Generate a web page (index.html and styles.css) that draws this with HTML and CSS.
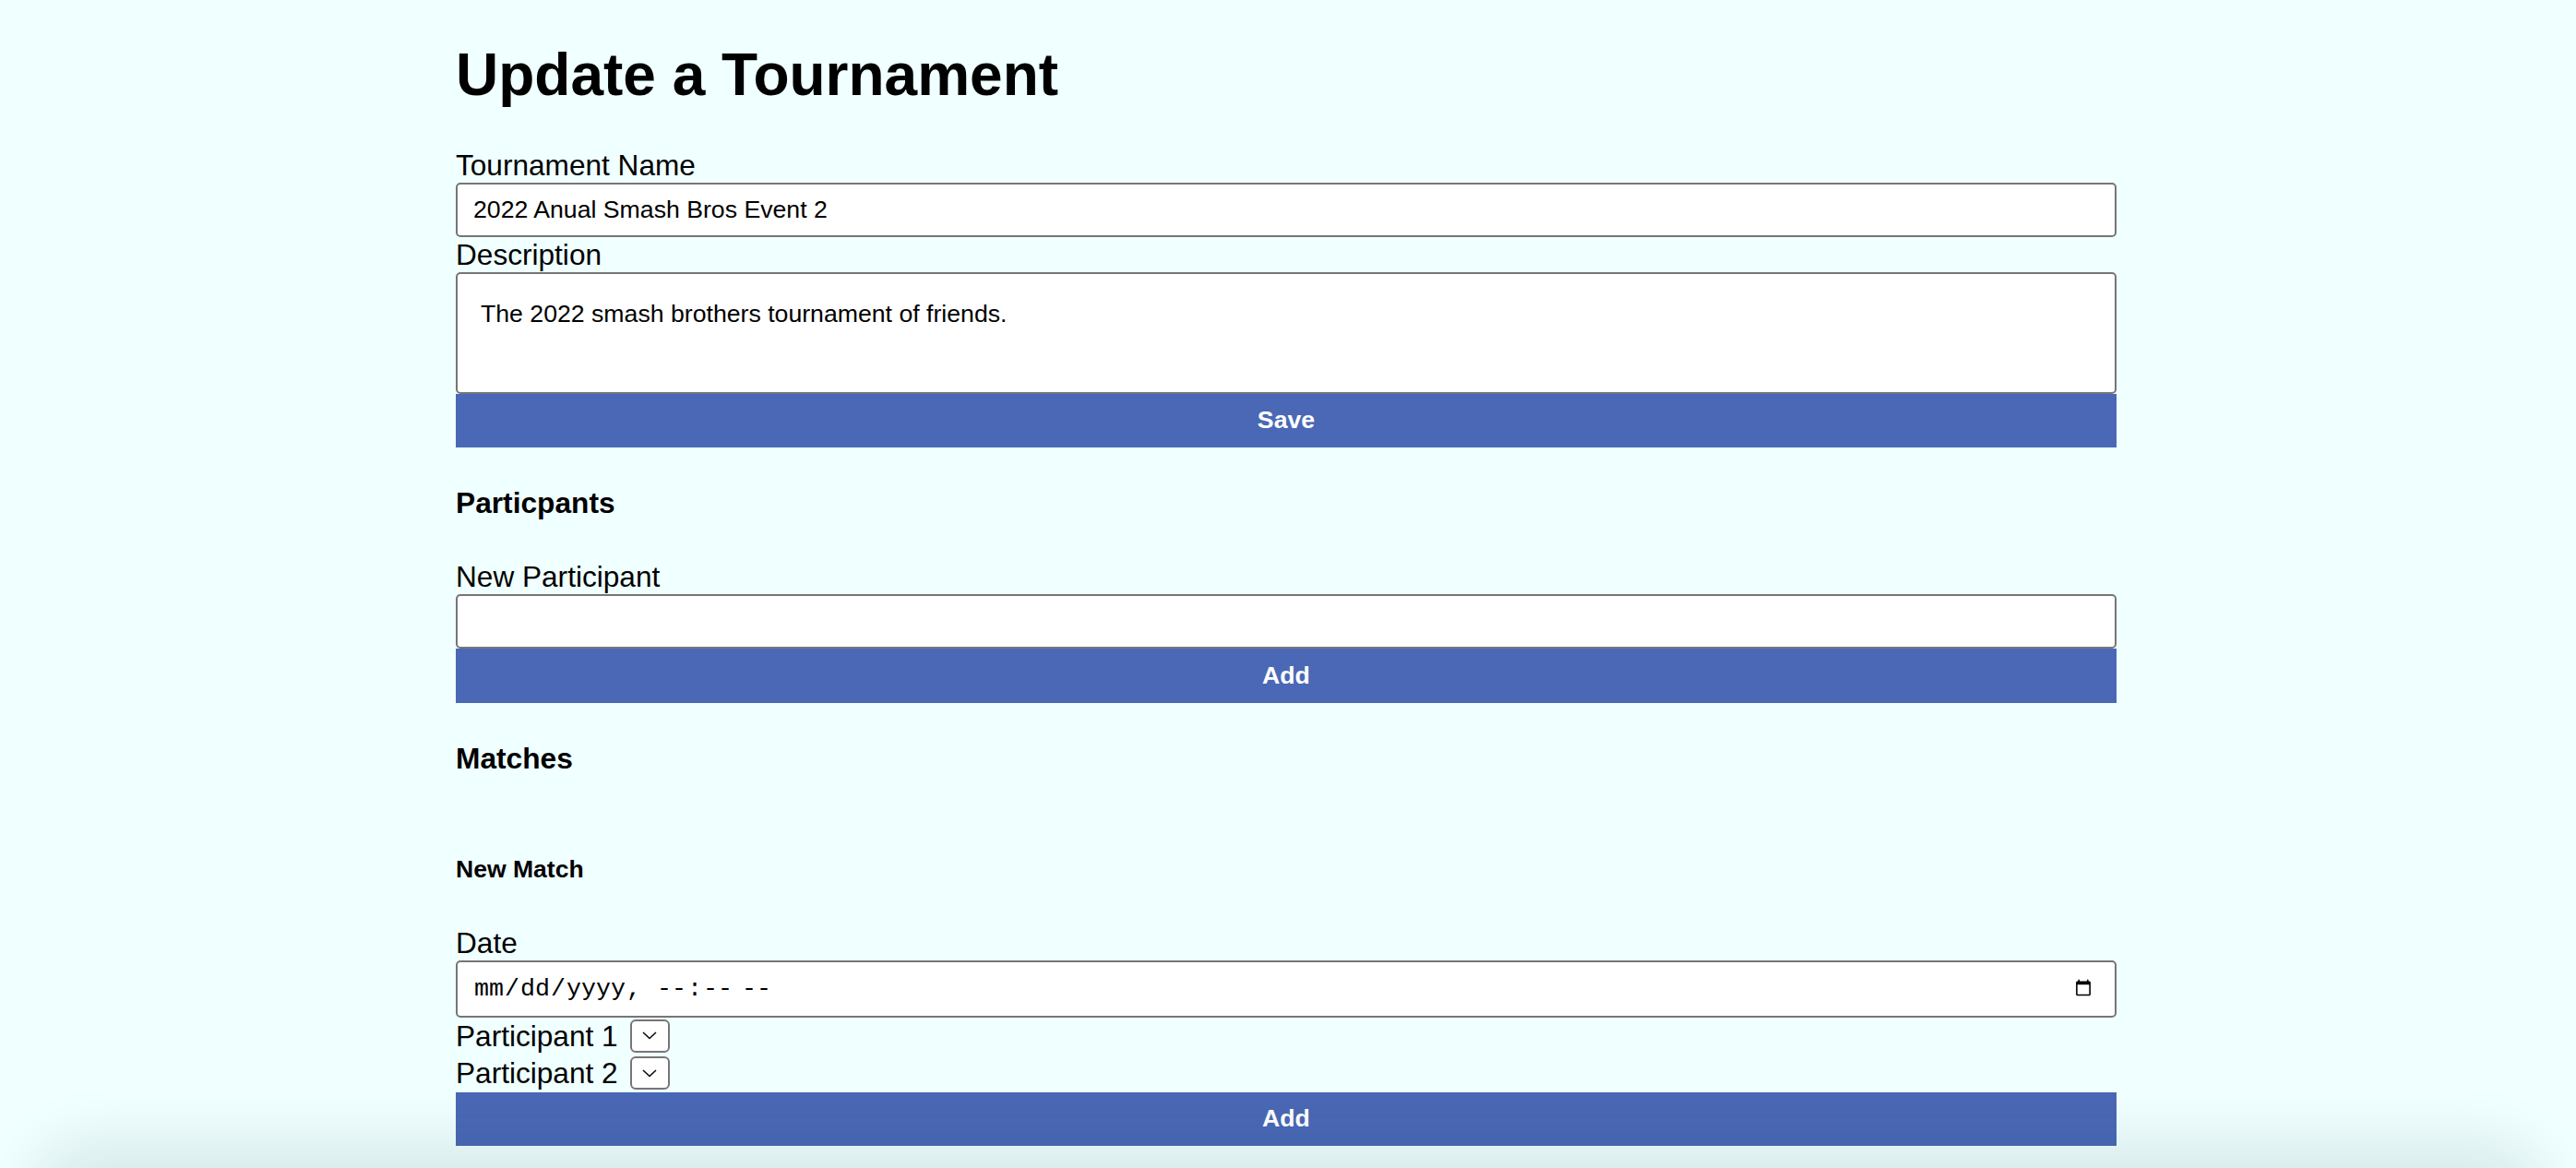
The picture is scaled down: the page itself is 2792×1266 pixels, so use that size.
FILE: index.html
```html
<!DOCTYPE html>
<html lang="en">
<head>
<meta charset="utf-8">
<title>Update a Tournament</title>
<link rel="stylesheet" href="styles.css">
</head>
<body>
<main class="page">
  <h1 class="page-title">Update a Tournament</h1>

  <form class="form">
    <label class="field-label" for="name">Tournament Name</label>
    <input class="text-input" id="name" type="text" value="2022 Anual Smash Bros Event 2">
    <label class="field-label" for="desc">Description</label>
    <textarea class="text-area" id="desc">The 2022 smash brothers tournament of friends.</textarea>
    <button class="btn" type="button">Save</button>
  </form>

  <h4 class="section-title">Particpants</h4>
  <form class="form">
    <label class="field-label" for="participant">New Participant</label>
    <input class="text-input" id="participant" type="text">
    <button class="btn" type="button">Add</button>
  </form>

  <h4 class="section-title matches-title">Matches</h4>
  <div class="match-list"></div>
  <h5 class="sub-title">New Match</h5>
  <form class="form">
    <label class="field-label" for="date">Date</label>
    <input class="date-input" id="date" type="datetime-local">
    <div class="select-row">
      <label class="row-label" for="p1">Participant 1</label>
      <span class="select-wrap">
        <select class="select" id="p1"></select>
        <svg class="chevron" width="16" height="9" viewBox="0 0 16 9"><path d="M1.5 1.5 L8 7.5 L14.5 1.5" fill="none" stroke="#111" stroke-width="1.7" stroke-linecap="round" stroke-linejoin="round"/></svg>
      </span>
    </div>
    <div class="select-row">
      <label class="row-label" for="p2">Participant 2</label>
      <span class="select-wrap">
        <select class="select" id="p2"></select>
        <svg class="chevron" width="16" height="9" viewBox="0 0 16 9"><path d="M1.5 1.5 L8 7.5 L14.5 1.5" fill="none" stroke="#111" stroke-width="1.7" stroke-linecap="round" stroke-linejoin="round"/></svg>
      </span>
    </div>
    <button class="btn btn-last" type="button">Add</button>
  </form>
</main>
<div class="window-shadow"></div>
</body>
</html>
```

FILE: styles.css
```css
html, body {
  margin: 0;
  padding: 0;
}

body {
  background: #f0ffff;
  color: #000;
  font-family: "Liberation Sans", Arial, Helvetica, sans-serif;
  overflow: hidden;
}

.page {
  display: flex;
  flex-direction: column;
  width: 1800px;
  margin-left: 494px;
  padding-top: 45px;
}

.page-title {
  margin: 0 0 42.5px;
  font-size: 64px;
  line-height: 72px;
  font-weight: bold;
}

.form {
  display: flex;
  flex-direction: column;
  margin: 0;
}

.field-label {
  display: block;
  font-size: 31.6px;
  line-height: 38px;
}

.text-input {
  box-sizing: border-box;
  width: 100%;
  height: 59px;
  margin: 0;
  padding: 0 17px;
  border: 2px solid #767676;
  border-radius: 5px;
  background: #fff;
  font-family: "Liberation Sans", Arial, sans-serif;
  font-size: 26.67px;
  color: #000;
  outline: none;
}

.text-area {
  box-sizing: border-box;
  display: block;
  width: 100%;
  height: 132px;
  margin: 0;
  padding: 28px 25px;
  border: 2px solid #767676;
  border-radius: 5px;
  background: #fff;
  font-family: "Liberation Sans", Arial, sans-serif;
  font-size: 26.67px;
  line-height: 30.6px;
  color: #000;
  resize: none;
  outline: none;
}

.btn {
  display: block;
  width: 100%;
  height: 58.5px;
  margin: 0;
  padding: 0;
  border: none;
  border-radius: 0;
  background: #4a68b6;
  color: #fff;
  font-family: "Liberation Sans", Arial, sans-serif;
  font-size: 26.67px;
  font-weight: bold;
  cursor: pointer;
}

.section-title {
  margin: 42px 0 42px;
  font-size: 31.7px;
  line-height: 37px;
  font-weight: bold;
}

.matches-title {
  margin: 42.5px 0 42.5px;
}

.match-list {
  height: 0;
}

.sub-title {
  margin: 43px 0 45.5px;
  font-size: 26.56px;
  line-height: 30.5px;
  font-weight: bold;
}

.date-input {
  box-sizing: border-box;
  width: 100%;
  height: 62px;
  margin: 0;
  padding: 0 24px 0 17px;
  border: 2px solid #767676;
  border-radius: 5px;
  background: #fff;
  font-family: "Liberation Mono", "Courier New", monospace;
  font-size: 26.67px;
  color: #000;
  outline: none;
}

.date-input::-webkit-calendar-picker-indicator {
  width: 20px;
  height: 21px;
  padding: 0;
  margin: 0;
}

.select-row {
  display: flex;
  align-items: center;
  height: 40.5px;
}

.row-label {
  font-size: 31.6px;
  line-height: 36px;
}

.select-wrap {
  position: relative;
  display: inline-block;
  width: 43px;
  height: 36px;
  margin-left: 13px;
}

.select {
  -webkit-appearance: none;
  appearance: none;
  box-sizing: border-box;
  display: block;
  width: 43px;
  height: 36px;
  margin: 0;
  padding: 0;
  border: 2px solid #767676;
  border-radius: 6px;
  background: #fff;
  outline: none;
}

.chevron {
  position: absolute;
  left: 13.5px;
  top: 13.5px;
  pointer-events: none;
}

.window-shadow {
  position: fixed;
  left: 60px;
  right: 60px;
  bottom: -60px;
  height: 60px;
  border-radius: 40px;
  box-shadow: 0 0 70px 25px rgba(0, 50, 50, 0.11);
  pointer-events: none;
}
```
